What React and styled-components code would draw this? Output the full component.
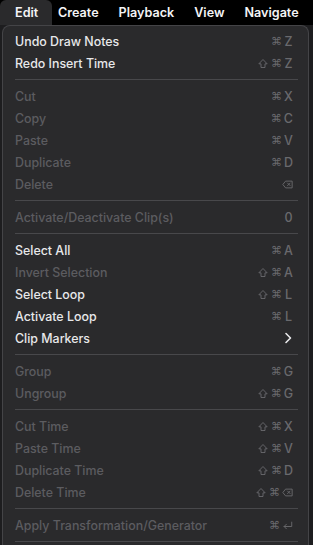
import styled, { createGlobalStyle } from "styled-components";

const GlobalStyle = createGlobalStyle`
  html, body {
    margin: 0;
    padding: 0;
    background: #1d1d1f;
  }
  body {
    font-family: Inter, "Liberation Sans", sans-serif;
    -webkit-font-smoothing: antialiased;
  }
`;

const topItems = ["Edit", "Create", "Playback", "View", "Navigate"];

// ^ = shift, # = command, < = backspace, ~ = return
const sections = [
  [
    { label: "Undo Draw Notes", keys: "#Z" },
    { label: "Redo Insert Time", keys: "^#Z" },
  ],
  [
    { label: "Cut", keys: "#X", off: true },
    { label: "Copy", keys: "#C", off: true },
    { label: "Paste", keys: "#V", off: true },
    { label: "Duplicate", keys: "#D", off: true },
    { label: "Delete", keys: "<", off: true },
  ],
  [{ label: "Activate/Deactivate Clip(s)", keys: "0", off: true }],
  [
    { label: "Select All", keys: "#A" },
    { label: "Invert Selection", keys: "^#A", off: true },
    { label: "Select Loop", keys: "^#L" },
    { label: "Activate Loop", keys: "#L" },
    { label: "Clip Markers", sub: true },
  ],
  [
    { label: "Group", keys: "#G", off: true },
    { label: "Ungroup", keys: "^#G", off: true },
  ],
  [
    { label: "Cut Time", keys: "^#X", off: true },
    { label: "Paste Time", keys: "^#V", off: true },
    { label: "Duplicate Time", keys: "^#D", off: true },
    { label: "Delete Time", keys: "^#<", off: true },
  ],
  [{ label: "Apply Transformation/Generator", keys: "#~", off: true }],
];

const KeyIcon = ({ k }) => {
  if (k === "^")
    return (
      <Glyph viewBox="0 0 12 12">
        <path d="M6 1.2 L11 6.4 H8.4 V10.8 H3.6 V6.4 H1 Z" fill="none" stroke="currentColor" strokeWidth="1.1" strokeLinejoin="round" />
      </Glyph>
    );
  if (k === "<")
    return (
      <Glyph viewBox="0 0 13 12" $w={11}>
        <path d="M4.2 2 H12 V10 H4.2 L1 6 Z" fill="none" stroke="currentColor" strokeWidth="1.1" strokeLinejoin="round" />
        <path d="M6.6 4.3 L9.6 7.3 M9.6 4.3 L6.6 7.3" stroke="currentColor" strokeWidth="1.1" strokeLinecap="round" />
      </Glyph>
    );
  if (k === "~")
    return (
      <Glyph viewBox="0 0 13 12" $w={11}>
        <path d="M11.5 2 V7.2 H2.5 M5.2 4.5 L2.5 7.2 L5.2 9.9" fill="none" stroke="currentColor" strokeWidth="1.1" strokeLinecap="round" strokeLinejoin="round" />
      </Glyph>
    );
  if (k === "#") return <CmdKey>⌘</CmdKey>;
  return <Key>{k}</Key>;
};

const App = () => {
  return (
    <>
      <GlobalStyle />
      <MenuBar>
        {topItems.map((t, i) => (
          <TopItem key={t} $active={i === 0}>
            {t}
          </TopItem>
        ))}
      </MenuBar>
      <Panel>
        {sections.map((sec, si) => (
          <div key={si}>
            {si > 0 && <Separator />}
            {sec.map((item) => (
              <Row key={item.label} $off={item.off}>
                <span>{item.label}</span>
                {item.sub ? (
                  <Chevron viewBox="0 0 8 12">
                    <path d="M2 1.5 L6.5 6 L2 10.5" fill="none" stroke="#e8e8ea" strokeWidth="1.6" strokeLinecap="round" strokeLinejoin="round" />
                  </Chevron>
                ) : (
                  <Keys>
                    {item.keys.split("").map((k, i) => (
                      <KeyIcon key={i} k={k} />
                    ))}
                  </Keys>
                )}
              </Row>
            ))}
          </div>
        ))}
        <Separator />
      </Panel>
    </>
  );
};
export default App;

const MenuBar = styled.div`
  height: 25px;
  background: #000;
  display: flex;
  align-items: stretch;
  gap: 20px;
  white-space: nowrap;
`;

const TopItem = styled.div`
  display: flex;
  align-items: center;
  color: #f4f4f6;
  font-size: 12.6px;
  font-weight: 600;
  ${(p) =>
    p.$active &&
    `
    background: #2a2a2c;
    border-radius: 6px 6px 0 0;
    padding: 0 0 0 15px;
    width: 37px;
    margin-right: -14px;
  `}
`;

const Panel = styled.div`
  margin: 0 4px 0 2px;
  background: #2a2a2c;
  border: 1px solid #444447;
  border-bottom: none;
  border-radius: 8px 8px 0 0;
  padding: 4px 0 0;
  min-height: 520px;
`;

const Separator = styled.div`
  height: 1px;
  background: #48484b;
  margin: 5px 10px 5px 12px;
`;

const Row = styled.div`
  height: 22px;
  display: flex;
  align-items: center;
  justify-content: space-between;
  padding: 0 15px 0 12px;
  font-size: 12.4px;
  font-weight: 500;
  color: ${(p) => (p.$off ? "#5c5c60" : "#e8e8ea")};
`;

const Keys = styled.span`
  display: flex;
  align-items: center;
  gap: 3px;
  color: #69696d;
`;

const Key = styled.span`
  font-size: 12.5px;
  min-width: 9px;
  text-align: center;
`;

const CmdKey = styled.span`
  font-family: "DejaVu Sans", sans-serif;
  font-size: 11px;
  width: 10px;
  text-align: center;
`;

const Glyph = styled.svg`
  width: ${(p) => p.$w || 10}px;
  height: 11px;
`;

const Chevron = styled.svg`
  width: 8px;
  height: 12px;
  margin-right: 1px;
`;
